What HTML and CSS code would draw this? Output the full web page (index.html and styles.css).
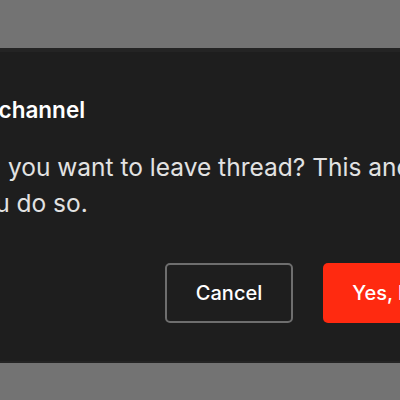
FILE: index.html
```html
<!DOCTYPE html>
<html>
<head>
<meta charset="utf-8">
<link rel="stylesheet" href="styles.css">
</head>
<body>
<div class="modal">
  <h2 class="title">Leave channel</h2>
  <p class="text">Would you want to leave thread? This and its replies<br>for you do so.</p>
  <div class="actions">
    <button class="btn btn-cancel">Cancel</button>
    <button class="btn btn-danger">Yes, leave</button>
  </div>
</div>
</body>
</html>
```
FILE: styles.css
```css
html, body {
  margin: 0;
  padding: 0;
}
body {
  width: 400px;
  height: 400px;
  overflow: hidden;
  background: #737373;
  font-family: Inter, "Noto Sans", sans-serif;
}
.modal {
  box-sizing: border-box;
  margin-top: 48px;
  margin-left: -102px;
  width: 610px;
  height: 315px;
  background: #1e1e1e;
  border-top: 4px solid #242424;
  border-bottom: 2px solid #242424;
  padding: 44px 30px 0 30px;
  white-space: nowrap;
}
.title {
  margin: 0;
  font-size: 22.5px;
  font-weight: 600;
  color: #ffffff;
  line-height: 27px;
}
.text {
  margin: 26px 0 0 0;
  font-size: 24.5px;
  line-height: 36px;
  color: #e2e2e2;
}
.actions {
  display: flex;
  justify-content: flex-end;
  gap: 30px;
  margin-top: 42px;
}
.btn {
  box-sizing: border-box;
  height: 60px;
  padding: 0 29px;
  font-family: Inter, "Noto Sans", sans-serif;
  font-size: 20px;
  font-weight: 500;
  border-radius: 5px;
  cursor: pointer;
}
.btn-cancel {
  background: transparent;
  color: #ffffff;
  border: 2px solid #6e6e6e;
}
.btn-danger {
  background: #ff2a10;
  color: #ffffff;
  border: none;
}
```
